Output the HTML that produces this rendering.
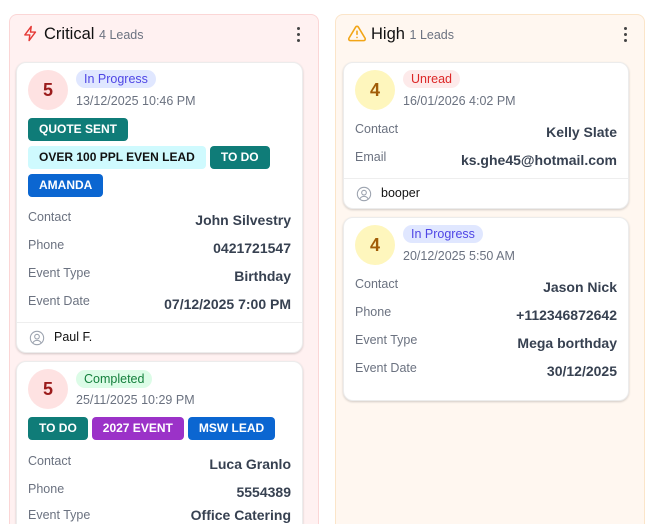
<!DOCTYPE html>
<html style="overflow:hidden;width:656px;height:524px"><head><meta charset="utf-8"><style>
*{box-sizing:border-box;margin:0;padding:0}
body{width:656px;height:524px;overflow:hidden;background:#fff;font-family:"Liberation Sans",Arial,sans-serif;position:relative}
.a{position:absolute}
.col{position:absolute;top:14px;width:310px;height:510px;border-radius:8px 8px 0 0;border-bottom:none!important}
.card{position:absolute;background:#fff;border:1px solid #ececec;border-radius:10px;box-shadow:0 1px 2px rgba(0,0,0,.18)}
.circ{position:absolute;width:40px;height:40px;border-radius:50%;font-weight:bold;font-size:18px;text-align:center;line-height:40px}
.badge{position:absolute;height:18px;line-height:18px;border-radius:9px;padding:0 8px;font-size:12.5px}
.date{position:absolute;font-size:12.5px;color:#6b7280}
.lbl{position:absolute;font-size:12.5px;color:#6b7280;line-height:18px}
.val{position:absolute;font-size:14px;font-weight:bold;color:#374151;text-align:right;line-height:18px;white-space:nowrap}
.tags{position:absolute;display:flex;flex-wrap:wrap;gap:5px 4px}
.tag{height:23px;line-height:23px;border-radius:4px;padding:0 11px;font-size:12px;font-weight:bold;color:#fff;white-space:nowrap}
.t{background:#0f7c78}.c{background:#cffafe;color:#111}.b{background:#0b66d1}.p{background:#9b32c8}
.hd{position:absolute;font-size:16.5px;color:#111}
.hd small{font-size:12.5px;color:#6b7280}
.dots{position:absolute;width:3px}
.dots i{display:block;width:3px;height:3px;background:#444;border-radius:50%;margin-bottom:3px}
.div{position:absolute;height:1px;background:#eee}
</style></head><body>

<div class="col" style="left:9px;background:#fff1f1;border:1px solid #fbd6d6"></div>
<div class="col" style="left:335px;background:#fff7f0;border:1px solid #fbe5c9"></div>

<svg class="a" style="left:22px;top:24px" width="17" height="19" viewBox="0 0 24 24" fill="none" stroke="#e53935" stroke-width="2" stroke-linejoin="round"><path d="M13 2 4 14h7l-1 8 9-12h-7l1-8z"/></svg>
<div class="hd" style="left:44px;top:25px">Critical <small>4 Leads</small></div>
<div class="dots" style="left:297px;top:27px"><i></i><i></i><i></i></div>

<svg class="a" style="left:347px;top:24px" width="20" height="19" viewBox="0 0 24 24" fill="none" stroke="#f2a516" stroke-width="2" stroke-linejoin="round" stroke-linecap="round"><path d="M10.3 3.9 1.8 18a2 2 0 0 0 1.7 3h17a2 2 0 0 0 1.7-3L13.7 3.9a2 2 0 0 0-3.4 0z"/><path d="M12 9v4M12 17h.01"/></svg>
<div class="hd" style="left:371px;top:25px">High <small>1 Leads</small></div>
<div class="dots" style="left:624px;top:27px"><i></i><i></i><i></i></div>

<!-- col1 card1 -->
<div class="card" style="left:16px;top:62px;width:287px;height:291px"></div>
<div class="circ" style="left:28px;top:70px;background:#fee2e2;color:#9b1c1c">5</div>
<div class="badge" style="left:76px;top:70px;background:#e0e7ff;color:#4f46e5">In Progress</div>
<div class="date" style="left:76px;top:94px">13/12/2025 10:46 PM</div>
<div class="tags" style="left:28px;top:118px;width:270px">
<span class="tag t" style="margin-right:120px">QUOTE SENT</span><span class="tag c">OVER 100 PPL EVEN LEAD</span><span class="tag t">TO DO</span><span class="tag b">AMANDA</span>
</div>
<div class="lbl" style="left:28px;top:208px">Contact</div><div class="val" style="right:365px;top:211px">John Silvestry</div>
<div class="lbl" style="left:28px;top:236px">Phone</div><div class="val" style="right:365px;top:239px">0421721547</div>
<div class="lbl" style="left:28px;top:264px">Event Type</div><div class="val" style="right:365px;top:267px">Birthday</div>
<div class="lbl" style="left:28px;top:292px">Event Date</div><div class="val" style="right:365px;top:295px">07/12/2025 7:00 PM</div>
<div class="div" style="left:17px;top:322px;width:285px"></div>
<svg class="a" style="left:29px;top:330px" width="16" height="16" viewBox="0 0 24 24" fill="none" stroke="#9ca3af" stroke-width="1.6"><circle cx="12" cy="12" r="10"/><circle cx="12" cy="10" r="3.5"/><path d="M6 19a7 7 0 0 1 12 0"/></svg>
<div class="a" style="left:54px;top:330px;font-size:12.5px;color:#111">Paul F.</div>

<!-- col1 card2 -->
<div class="card" style="left:16px;top:361px;width:287px;height:163px;border-bottom:none;border-radius:10px 10px 0 0"></div>
<div class="circ" style="left:28px;top:369px;background:#fee2e2;color:#9b1c1c">5</div>
<div class="badge" style="left:76px;top:370px;background:#dcfce7;color:#15803d">Completed</div>
<div class="date" style="left:76px;top:393px">25/11/2025 10:29 PM</div>
<div class="tags" style="left:28px;top:417px;width:270px">
<span class="tag t">TO DO</span><span class="tag p">2027 EVENT</span><span class="tag b">MSW LEAD</span>
</div>
<div class="lbl" style="left:28px;top:452px">Contact</div><div class="val" style="right:365px;top:455px">Luca Granlo</div>
<div class="lbl" style="left:28px;top:480px">Phone</div><div class="val" style="right:365px;top:483px">5554389</div>
<div class="lbl" style="left:28px;top:506px">Event Type</div><div class="val" style="right:365px;top:506px;height:18px;overflow:hidden">Office Catering</div>

<!-- col2 card1 -->
<div class="card" style="left:343px;top:62px;width:286px;height:147px"></div>
<div class="circ" style="left:355px;top:70px;background:#fef6bd;color:#a15c07">4</div>
<div class="badge" style="left:403px;top:70px;background:#fdeaea;color:#dc2626">Unread</div>
<div class="date" style="left:403px;top:94px">16/01/2026 4:02 PM</div>
<div class="lbl" style="left:355px;top:120px">Contact</div><div class="val" style="right:39px;top:123px">Kelly Slate</div>
<div class="lbl" style="left:355px;top:148px">Email</div><div class="val" style="right:39px;top:151px">ks.ghe45@hotmail.com</div>
<div class="div" style="left:344px;top:178px;width:284px"></div>
<svg class="a" style="left:356px;top:186px" width="16" height="16" viewBox="0 0 24 24" fill="none" stroke="#9ca3af" stroke-width="1.6"><circle cx="12" cy="12" r="10"/><circle cx="12" cy="10" r="3.5"/><path d="M6 19a7 7 0 0 1 12 0"/></svg>
<div class="a" style="left:381px;top:186px;font-size:12.5px;color:#111">booper</div>

<!-- col2 card2 -->
<div class="card" style="left:343px;top:217px;width:286px;height:184px"></div>
<div class="circ" style="left:355px;top:225px;background:#fef6bd;color:#a15c07">4</div>
<div class="badge" style="left:403px;top:225px;background:#e0e7ff;color:#4f46e5">In Progress</div>
<div class="date" style="left:403px;top:249px">20/12/2025 5:50 AM</div>
<div class="lbl" style="left:355px;top:275px">Contact</div><div class="val" style="right:39px;top:278px">Jason Nick</div>
<div class="lbl" style="left:355px;top:303px">Phone</div><div class="val" style="right:39px;top:306px">+112346872642</div>
<div class="lbl" style="left:355px;top:331px">Event Type</div><div class="val" style="right:39px;top:334px">Mega borthday</div>
<div class="lbl" style="left:355px;top:359px">Event Date</div><div class="val" style="right:39px;top:362px">30/12/2025</div>

</body></html>
